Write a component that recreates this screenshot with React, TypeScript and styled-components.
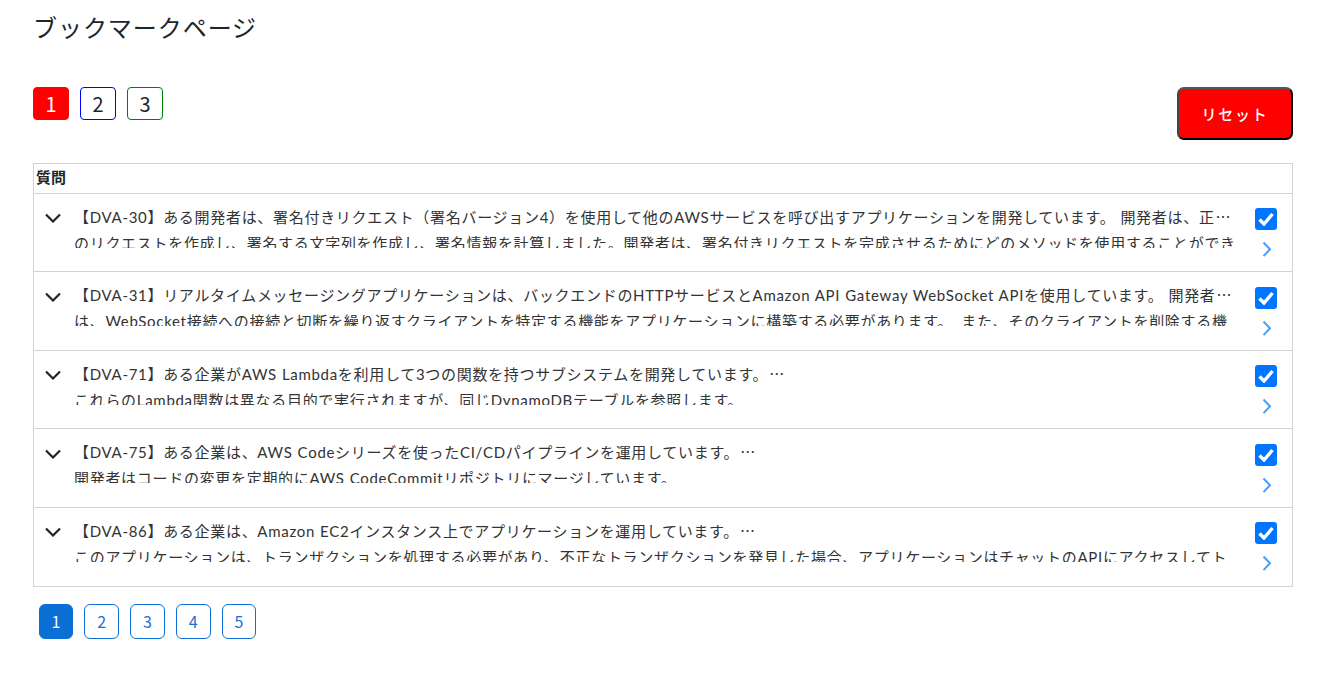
import React from 'react';
import styled, { createGlobalStyle } from 'styled-components';

const GlobalStyle = createGlobalStyle`
    html, body {
        margin: 0;
        padding: 0;
        background: #ffffff;
    }
    body {
        font-family: "Noto Sans CJK JP", "Noto Sans", sans-serif;
        color: #212529;
    }
`;

const Page = styled.div`
    width: 1337px;
    height: 688px;
    box-sizing: border-box;
    padding: 0 44px 0 33px;
    overflow: hidden;
`;

const Title = styled.h1`
    margin: 0;
    height: 87px;
    padding-top: 10px;
    box-sizing: border-box;
    font-size: 24px;
    line-height: 34px;
    font-weight: 400;
    letter-spacing: 0.95px;
    color: #212529;
`;

const Toolbar = styled.div`
    display: flex;
    justify-content: space-between;
    align-items: flex-start;
    height: 76px;
`;

const SetButtons = styled.div`
    display: flex;
    gap: 11px;
`;

const SetButton = styled.button<{ $color: string; $active?: boolean }>`
    width: 36px;
    height: 33px;
    padding: 0;
    border: 1px solid ${p => p.$color};
    border-radius: 4px;
    background: ${p => (p.$active ? p.$color : '#ffffff')};
    color: ${p => (p.$active ? '#ffffff' : '#212529')};
    font-family: inherit;
    font-size: 20px;
    line-height: 1;
`;

const ResetButton = styled.button`
    width: 116px;
    height: 53px;
    padding: 0;
    border: 2px solid #000000;
    border-top-color: #555555;
    border-left-color: #444444;
    border-radius: 7px;
    background: #ff0000;
    color: #ffffff;
    font-family: inherit;
    font-size: 15px;
    font-weight: 500;
    letter-spacing: 1.7px;
`;

const Table = styled.div`
    border: 1px solid #d3d3d3;
    border-bottom: 0;
`;

const HeadRow = styled.div`
    height: 29.8px;
    box-sizing: border-box;
    padding: 3px 0 0 2px;
    border-bottom: 1px solid #d3d3d3;
    font-size: 15px;
    line-height: 20px;
    font-weight: 700;
`;

const Row = styled.div`
    display: flex;
    height: 78.55px;
    box-sizing: border-box;
    border-bottom: 1px solid #d3d3d3;
`;

const ExpandCell = styled.div`
    width: 40px;
    flex: none;
    padding: 19.4px 0 0 11px;
    box-sizing: border-box;
    color: #212529;
    svg {
        display: block;
    }
`;

const TextCell = styled.div`
    flex: 1;
    min-width: 0;
    height: 54px;
    margin-top: 12px;
    overflow: hidden;
`;

const Question = styled.div`
    font-family: Lato, "Noto Sans CJK JP", sans-serif;
    font-size: 15px;
    line-height: 21px;
    letter-spacing: 0.7px;
    word-spacing: 0.5px;
    white-space: nowrap;
    color: #333333;
`;

const Dots = styled.span`
    margin-left: 1px;
    font-family: "Noto Sans CJK JP", sans-serif;
`;

const Detail = styled(Question)`
    height: 17px;
    margin-top: 3px;
    line-height: 24px;
    overflow: hidden;
`;

const ActionCell = styled.div`
    width: 52px;
    flex: none;
    padding-top: 14.3px;
    display: flex;
    flex-direction: column;
    align-items: center;
    gap: 11px;
    box-sizing: border-box;
`;

const Check = styled.span`
    display: flex;
    align-items: center;
    justify-content: center;
    width: 22px;
    height: 22px;
    border-radius: 3px;
    background: #0075ff;
`;

const NextLink = styled.a`
    display: block;
    height: 17px;
    margin-left: 2px;
    color: #4a9ff5;
    svg {
        display: block;
    }
`;

const Pager = styled.div`
    display: flex;
    gap: 11px;
    padding: 17px 0 0 5.6px;
`;

const PageButton = styled.button<{ $active?: boolean }>`
    width: 34.75px;
    height: 35px;
    padding: 0;
    border: 1px solid #0b6fd6;
    border-radius: 6px;
    background: ${p => (p.$active ? '#0b6fd6' : '#ffffff')};
    color: ${p => (p.$active ? '#ffffff' : '#1f6fd0')};
    font-family: inherit;
    font-size: 16px;
    line-height: 1;
`;

interface Item {
    title: string;
    detail: string;
}

const items: Item[] = [
    {
        title: '【DVA-30】ある開発者は、署名付きリクエスト（署名バージョン4）を使用して他のAWSサービスを呼び出すアプリケーションを開発しています。 開発者は、正',
        detail: 'のリクエストを作成し、署名する文字列を作成し、署名情報を計算しました。開発者は、署名付きリクエストを完成させるためにどのメソッドを使用することができ',
    },
    {
        title: '【DVA-31】リアルタイムメッセージングアプリケーションは、バックエンドのHTTPサービスとAmazon API Gateway WebSocket APIを使用しています。 開発者',
        detail: 'は、WebSocket接続への接続と切断を繰り返すクライアントを特定する機能をアプリケーションに構築する必要があります。\u2002また、そのクライアントを削除する機',
    },
    {
        title: '【DVA-71】ある企業がAWS Lambdaを利用して3つの関数を持つサブシステムを開発しています。',
        detail: 'これらのLambda関数は異なる目的で実行されますが、同じDynamoDBテーブルを参照します。',
    },
    {
        title: '【DVA-75】ある企業は、AWS Codeシリーズを使ったCI/CDパイプラインを運用しています。',
        detail: '開発者はコードの変更を定期的にAWS CodeCommitリポジトリにマージしています。',
    },
    {
        title: '【DVA-86】ある企業は、Amazon EC2インスタンス上でアプリケーションを運用しています。',
        detail: 'このアプリケーションは、トランザクションを処理する必要があり、不正なトランザクションを発見した場合、アプリケーションはチャットのAPIにアクセスしてト',
    },
];

const ChevronDown = () => (
    <svg width="16" height="10" viewBox="0 0 16 10" fill="none" stroke="currentColor" strokeWidth="2.2">
        <path d="M1 1.5l7 7 7-7" />
    </svg>
);

const ChevronRight = () => (
    <svg width="10" height="17" viewBox="0 0 10 17" fill="none" stroke="currentColor" strokeWidth="2">
        <path d="M1.5 1.5l6.5 6.8-6.5 6.8" />
    </svg>
);

const CheckMark = () => (
    <svg width="16" height="14" viewBox="0 0 16 14" fill="none" stroke="#ffffff" strokeWidth="3.4">
        <path d="M1.5 7.5l4.5 4.5 8.5-10" />
    </svg>
);

const App: React.FC = () => {
    return (
        <React.Fragment>
            <GlobalStyle />
            <Page>
                <Title>ブックマークページ</Title>
                <Toolbar>
                    <SetButtons>
                        <SetButton $color="#ff0000" $active>1</SetButton>
                        <SetButton $color="#0000ff">2</SetButton>
                        <SetButton $color="#008000">3</SetButton>
                    </SetButtons>
                    <ResetButton>リセット</ResetButton>
                </Toolbar>
                <Table>
                    <HeadRow>質問</HeadRow>
                    {items.map(item => (
                        <Row key={item.title}>
                            <ExpandCell>
                                <ChevronDown />
                            </ExpandCell>
                            <TextCell>
                                <Question>
                                    {item.title}
                                    <Dots>…</Dots>
                                </Question>
                                <Detail>{item.detail}</Detail>
                            </TextCell>
                            <ActionCell>
                                <Check>
                                    <CheckMark />
                                </Check>
                                <NextLink>
                                    <ChevronRight />
                                </NextLink>
                            </ActionCell>
                        </Row>
                    ))}
                </Table>
                <Pager>
                    {[1, 2, 3, 4, 5].map(n => (
                        <PageButton key={n} $active={n === 1}>{n}</PageButton>
                    ))}
                </Pager>
            </Page>
        </React.Fragment>
    );
};

export default App;
